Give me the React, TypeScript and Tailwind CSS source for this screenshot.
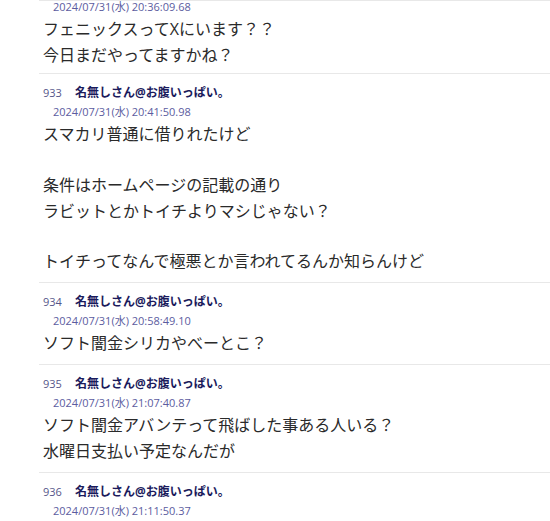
const posts = [
  {
    no: 932,
    date: "2024/07/31(水) 20:36:09.68",
    lines: ["フェニックスってXにいます？？", "今日まだやってますかね？"],
  },
  {
    no: 933,
    date: "2024/07/31(水) 20:41:50.98",
    lines: [
      "スマカリ普通に借りれたけど",
      "",
      "条件はホームページの記載の通り",
      "ラビットとかトイチよりマシじゃない？",
      "",
      "トイチってなんで極悪とか言われてるんか知らんけど",
    ],
  },
  {
    no: 934,
    date: "2024/07/31(水) 20:58:49.10",
    lines: ["ソフト闇金シリカやべーとこ？"],
  },
  {
    no: 935,
    date: "2024/07/31(水) 21:07:40.87",
    lines: ["ソフト闇金アバンテって飛ばした事ある人いる？", "水曜日支払い予定なんだが"],
  },
  {
    no: 936,
    date: "2024/07/31(水) 21:11:50.37",
    lines: [],
  },
];

const Post = ({
  no,
  date,
  lines,
  first,
}: {
  no: number;
  date: string;
  lines: string[];
  first?: boolean;
}) => (
  <div className={`border-t border-[#e8e8e8] pt-[9px] pl-[4px] ${first ? "pb-[5px]" : "pb-[8px]"}`}>
    <div className="flex items-center h-[20px] leading-[20px]">
      <span className="text-[11px] text-[#56568a] w-[32px]">{no}</span>
      <span className="text-[12px] font-bold text-[#1b1b5c]">名無しさん@お腹いっぱい。</span>
    </div>
    <div className="pl-[10px] h-[18px] text-[11px] leading-[18px] text-[#5c5ca0]">{date}</div>
    <div className="text-[16px] leading-[26px] text-[#2a2a2a]">
      {lines.map((l, i) =>
        l ? (
          <div key={i} className="h-[26px] whitespace-nowrap">
            {l}
          </div>
        ) : (
          <div key={i} className="h-[24.5px]" />
        )
      )}
    </div>
  </div>
);

export default function App() {
  return (
    <div
      className="w-[550px] h-[521px] bg-white overflow-hidden"
      style={{ fontFamily: '"Open Sans", "Noto Sans CJK JP", sans-serif' }}
    >
      <div className="ml-[39px] h-full border-t border-[#e8e8e8] overflow-hidden">
        <div className="-mt-[33px]">
          {posts.map((p, i) => (
            <Post key={p.no} {...p} first={i === 0} />
          ))}
        </div>
      </div>
    </div>
  );
}
